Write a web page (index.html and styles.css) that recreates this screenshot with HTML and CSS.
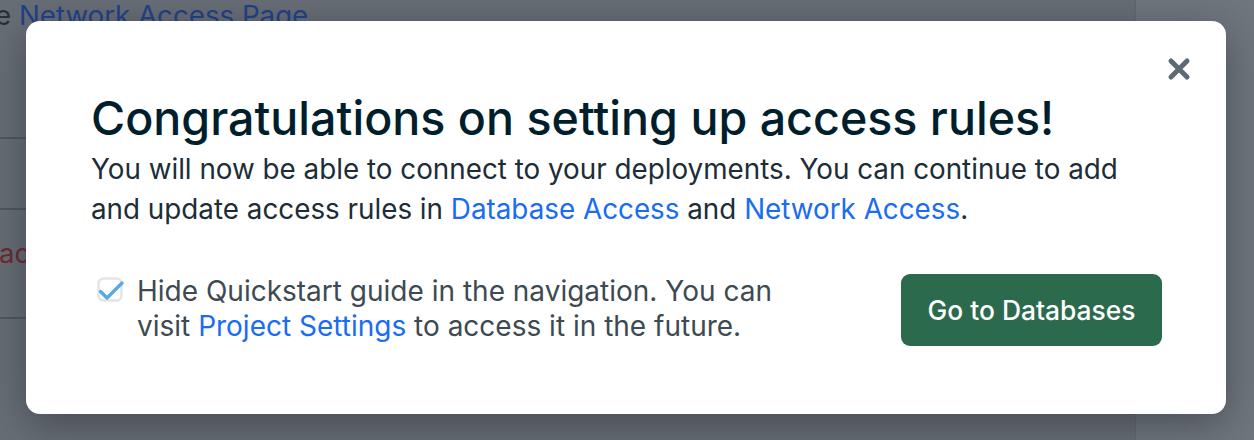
FILE: index.html
```html
<!DOCTYPE html>
<html lang="en">
<head>
<meta charset="utf-8">
<title>Congratulations</title>
<link rel="stylesheet" href="styles.css">
</head>
<body>
<div class="page">
  <main class="main">
    <p class="crumb"><span class="crumb-dark">e</span> <span class="crumb-link">Network Access Page</span></p>
    <div class="rule rule-1"></div>
    <div class="rule rule-2"></div>
    <p class="warn">ady</p>
    <div class="rule rule-3"></div>
  </main>
  <aside class="side"></aside>
</div>

<div class="modal" role="dialog" aria-labelledby="modal-title">
  <button class="close" type="button" aria-label="Close">
    <svg viewBox="0 0 24 24" width="24" height="24" aria-hidden="true">
      <path d="M4 4 L20 20 M20 4 L4 20" stroke="#5c6b73" stroke-width="5" stroke-linecap="round" fill="none"/>
    </svg>
  </button>
  <h1 id="modal-title" class="title">Congratulations on setting up access rules!</h1>
  <p class="body">You will now be able to connect to your deployments. You can continue to add and update access rules in <a class="link" href="#">Database Access</a> and <a class="link" href="#">Network Access</a>.</p>
  <div class="footer">
    <label class="check">
      <span class="check-box">
        <svg viewBox="0 0 30 30" width="30" height="30" aria-hidden="true">
          <rect x="1.5" y="1.5" width="23" height="22" rx="5" fill="none" stroke="#e2e5e6" stroke-width="2.5"/>
          <path d="M3.5 14.5 L10 21 L25 6" stroke="#5aa9e6" stroke-width="3.4" stroke-linecap="round" stroke-linejoin="round" fill="none"/>
        </svg>
      </span>
      <span class="check-text">Hide Quickstart guide in the navigation. You can visit <a class="link" href="#">Project Settings</a> to access it in the future.</span>
    </label>
    <button class="primary" type="button">Go to Databases</button>
  </div>
</div>
</body>
</html>
```
FILE: styles.css
```css
* { box-sizing: border-box; }
html, body { margin: 0; padding: 0; }
body {
  width: 1254px;
  height: 440px;
  overflow: hidden;
  font-family: "Inter", "Liberation Sans", sans-serif;
  background: #70767e;
  position: relative;
}
.page {
  display: flex;
  height: 440px;
}
.main {
  width: 1136px;
  height: 440px;
  background: #686e76;
  border-right: 1px solid #62686f;
  overflow: hidden;
}
.side { flex: 1; }
.crumb {
  margin: -1px 0 0 -5px;
  font-size: 27.7px;
  line-height: 32px;
  white-space: nowrap;
}
.crumb-dark { color: #2c3137; }
.crumb-link { color: #21418a; }
.rule {
  height: 2px;
  background: #51575e;
}
.rule-1 { margin-top: 106px; }
.rule-2 { margin-top: 69px; }
.warn {
  margin: 27px 0 0 -1px;
  font-size: 27.7px;
  line-height: 32px;
  color: #6e2a2f;
}
.rule-3 { margin-top: 48px; }

.modal {
  position: absolute;
  left: 26px;
  top: 21px;
  width: 1200px;
  padding: 71px 64px 68px 65px;
  background: #fff;
  border-radius: 14px;
  box-shadow: 0 10px 40px rgba(25, 30, 36, 0.45);
}
.close {
  position: absolute;
  right: 35px;
  top: 36px;
  width: 24px;
  height: 24px;
  padding: 0;
  border: 0;
  background: none;
  cursor: pointer;
}
.close svg { display: block; }
.title {
  margin: 0;
  font-size: 46.6px;
  line-height: 52px;
  font-weight: 500;
  color: #001e2b;
}
.body {
  margin: 5px 0 0 0;
  max-width: 1050px;
  font-size: 27.8px;
  line-height: 40px;
  color: #1c2d38;
}
.link {
  color: #1a6cf3;
  text-decoration: none;
}
.footer {
  margin-top: 45px;
  display: flex;
  justify-content: space-between;
  align-items: flex-start;
}
.check {
  display: flex;
  align-items: flex-start;
}
.check-box {
  width: 46px;
  flex: none;
  padding: 3px 0 0 6px;
}
.check-box svg { display: block; }
.check-text {
  width: 660px;
  font-size: 28px;
  line-height: 35px;
  color: #3d4a52;
}
.primary {
  width: 261px;
  height: 72px;
  border: 0;
  border-radius: 9px;
  background: #2c6a4e;
  color: #fff;
  font-family: "Inter", "Liberation Sans", sans-serif;
  font-size: 26.4px;
  font-weight: 500;
  cursor: pointer;
}
```
